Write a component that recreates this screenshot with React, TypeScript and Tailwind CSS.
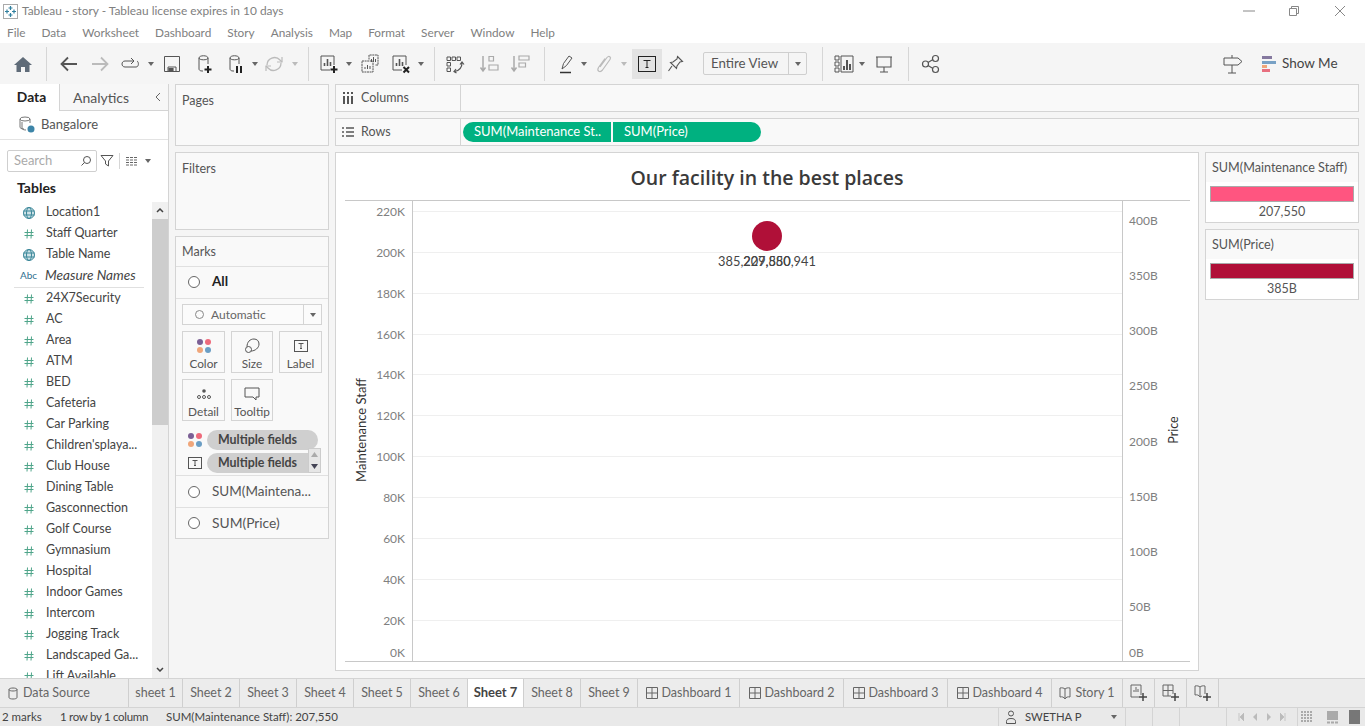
import React from "react";

type IconProps = { className?: string };

const fieldNames = [
  "24X7Security", "AC", "Area", "ATM", "BED", "Cafeteria", "Car Parking", "Children'splaya...", "Club House",
  "Dining Table", "Gasconnection", "Golf Course", "Gymnasium", "Hospital", "Indoor Games", "Intercom",
  "Jogging Track", "Landscaped Ga...", "Lift Available",
];
const leftTicks = [
  ["220K", 212], ["200K", 253], ["180K", 294], ["160K", 335], ["140K", 375], ["120K", 416],
  ["100K", 457], ["80K", 498], ["60K", 539], ["40K", 580], ["20K", 621], ["0K", 653],
] as const;
const rightTicks = [
  ["400B", 221], ["350B", 276], ["300B", 331], ["250B", 386], ["200B", 442],
  ["150B", 497], ["100B", 552], ["50B", 607], ["0B", 653],
] as const;
const gridLines = [211, 252, 293, 334, 374, 415, 456, 497, 538, 579, 620];

function Svg({ className = "", children }: IconProps & { children: React.ReactNode }) {
  return (
    <svg width="24" height="24" viewBox="0 0 24 24" fill="none" stroke="#555" strokeWidth="1.2" className={"shrink-0 " + className}>
      {children}
    </svg>
  );
}

function Caret({ className = "" }: IconProps) {
  return (
    <svg width="6" height="4" viewBox="0 0 6 4" className={"shrink-0 " + className}>
      <path d="M0 0h6L3 4z" fill="#666" />
    </svg>
  );
}

function Sep({ className = "" }: IconProps) {
  return <div className={"w-px h-[34px] bg-[#d6d6d6] shrink-0 " + className} />;
}

function Cylinder({ badge, className }: IconProps & { badge: "plus" | "pause" }) {
  return (
    <Svg className={className}>
      <path d="M7 6c0-3 9-3 9 0v6M7 6c0 2.400 9 2.400 9 0M7 6v11c0 1 1 2 3 2h1" strokeWidth="1" />
      {badge === "plus" ? (
        <path d="M16 14v7M12.500 17.500h7" stroke="#222" strokeWidth="2" />
      ) : (
        <path d="M14 14v7M18 14v7" stroke="#222" strokeWidth="2" />
      )}
    </Svg>
  );
}

function ChartBox({ badge, className }: IconProps & { badge: "plus" | "x" }) {
  return (
    <Svg className={className}>
      <path d="M17 13V4H4v14h9" strokeWidth="1" />
      <path d="M7.500 14v-3M10.500 14V7M13.500 14v-4" strokeWidth="1.600" />
      {badge === "plus" ? (
        <path d="M17 14v7M13.500 17.500h7" stroke="#222" strokeWidth="2" />
      ) : (
        <path d="M14.500 15l5.500 5.500M20 15l-5.500 5.500" stroke="#222" strokeWidth="2" />
      )}
    </Svg>
  );
}

function ToolBar() {
  return (
    <div className="h-[41px] bg-[#f5f5f5] flex items-center shrink-0 pl-[11px] pr-[28px]">
      <svg width="24" height="24" viewBox="0 0 24 24" className="shrink-0">
        <path d="M12 5l9 8h-2.500v7h-4.500v-5h-4v5H5.500v-7H3z" fill="#5f6b78" />
      </svg>
      <Sep className="ml-[11px]" />
      <Svg className="ml-[10px]">
        <path d="M20 12H5M11 5.500L4.500 12l6.500 6.500" stroke="#555" strokeWidth="1.800" />
      </Svg>
      <Svg className="ml-[7px]">
        <path d="M4 12h15M13 5.500l6.500 6.500-6.500 6.500" stroke="#bbb" strokeWidth="1.800" />
      </Svg>
      <Svg className="ml-[6px]">
        <path d="M16 9H7c-4 0-4 6 0 6h11c3 0 3-5 1-6M13 6l3 3-3 3" strokeWidth="1" />
      </Svg>
      <Caret className="ml-[6px]" />
      <Svg className="ml-[6px]">
        <path d="M4.500 4.500h15v15h-15zM8 19.500V15h8v4.500" strokeWidth="1" />
        <path d="M9 16.500h4v3H9z" fill="#555" />
      </Svg>
      <Cylinder badge="plus" className="ml-[8px]" />
      <Cylinder badge="pause" className="ml-[7px]" />
      <Caret className="ml-[5px]" />
      <Svg className="ml-[4px]">
        <path d="M5 13a7.500 7.500 0 0 1 13-5l2 2M19 11a7.500 7.500 0 0 1-13 5l-2-2" stroke="#bbb" strokeWidth="1.300" />
        <path d="M20 5v5h-5M4 19v-5h5" stroke="#bbb" />
      </Svg>
      <svg width="6" height="4" viewBox="0 0 6 4" className="shrink-0 ml-[6px]">
        <path d="M0 0h6L3 4z" fill="#bbb" />
      </svg>
      <Sep className="ml-[10px]" />
      <ChartBox badge="plus" className="ml-[8px]" />
      <Caret className="ml-[5px]" />
      <Svg className="ml-[6px]">
        <path d="M11 7.500V3h9v10h-3M4 9h11v11H4z" strokeWidth="1" strokeDasharray="2 0.600" />
        <path d="M13.500 10V7M15.500 10V5M17.500 10V7M7 17v-2M9.500 17v-4M12 17v-3" strokeWidth="1" />
      </Svg>
      <ChartBox badge="x" className="ml-[7px]" />
      <Caret className="ml-[5px]" />
      <Sep className="ml-[10px]" />
      <Svg className="ml-[8px]">
        <path d="M4 5h3.500v3.500H4zM9 5h3.500v3.500H9zM14 5h3.500v3.500H14zM4 10.500h3.500V14H4zM4 16h3.500v3.500H4z" strokeWidth="1" />
        <path d="M19 11c0 4.500-2.500 7.500-7.500 8.500M13 17l-2 2.500 2.500 1.500M17 12.500l2-2.500 2 2.500" strokeWidth="1.200" />
      </Svg>
      <Svg className="ml-[10px]">
        <path d="M6 4v15M3.500 15.500L6 19l2.500-3.500" stroke="#aaa" strokeWidth="1.500" />
        <path d="M12 4.500h4.500V9H12zM12 13h9v5h-9z" stroke="#aaa" />
      </Svg>
      <Svg className="ml-[7px]">
        <path d="M6 4v15M3.500 15.500L6 19l2.500-3.500" stroke="#aaa" strokeWidth="1.500" />
        <path d="M11 4h10v4H11zM11 11h6.500v4H11z" stroke="#aaa" />
      </Svg>
      <Sep className="ml-[12px]" />
      <Svg className="ml-[10px]">
        <path d="M7 17l1.500-5.500L14 4l3 2-5.500 7.500z" strokeWidth="1" />
        <path d="M5 20.500h11" stroke="#333" strokeWidth="1.500" />
      </Svg>
      <Caret className="ml-[2px]" />
      <Svg className="ml-[5px]">
        <path d="M8 15l7-9.500c2-2.500 4.500 0 3 2L10.500 18c-2.500 3-6 1-4-2.500l6.500-9" stroke="#bbb" strokeWidth="1.200" />
      </Svg>
      <svg width="6" height="4" viewBox="0 0 6 4" className="shrink-0 ml-[5px]">
        <path d="M0 0h6L3 4z" fill="#bbb" />
      </svg>
      <div className="ml-[5px] w-[30px] h-[30px] bg-[#e3e3e3] flex items-center justify-center shrink-0">
        <svg width="18" height="16" viewBox="0 0 18 16">
          <rect x="0.500" y="0.500" width="17" height="15" fill="none" stroke="#222" />
          <path d="M5.500 4.500h7M9 4.500v7M7.500 11.500h3" stroke="#222" />
        </svg>
      </div>
      <Svg className="ml-[2px]">
        <path d="M13.500 4.500l5 5-2.500.500-3 4-.500 2.500-6-6 2.500-.500 4-3zM8 14l-3.500 5" strokeWidth="1.100" />
      </Svg>
      <div className="ml-[15px] w-[104px] h-[23px] border border-[#cfcfcf] rounded-[2px] flex items-center shrink-0">
        <span className="flex-1 pl-[7px] text-[13.300px] text-[#555]">Entire View</span>
        <div className="w-[18px] h-full border-l border-[#cfcfcf] flex items-center justify-center">
          <Caret />
        </div>
      </div>
      <Sep className="ml-[15px]" />
      <Svg className="ml-[9px]">
        <path d="M3 4h4v4H3zM3 10h4v4H3zM3 16h4v4H3zM9 4h12v16H9z" strokeWidth="1" />
        <path d="M12 18v-4M15 18V8M18 18v-6" strokeWidth="2" />
      </Svg>
      <Caret className="ml-[3px]" />
      <Svg className="ml-[7px]">
        <path d="M4 5h16M5 5v10h14V5M12 15v5M8 20h8" strokeWidth="1.100" />
      </Svg>
      <Sep className="ml-[12px]" />
      <Svg className="ml-[10px]">
        <circle cx="6.500" cy="12" r="3" />
        <circle cx="16.500" cy="6.500" r="3" />
        <circle cx="16.500" cy="17.500" r="3" />
        <path d="M9 10.500l5-3M9 13.500l5 3" />
      </Svg>
      <div className="flex-1" />
      <Svg>
        <path d="M3 6h14l4 3.500-4 3.500H3zM11 6V3M11 13v8M7 21h8" strokeWidth="1" />
      </Svg>
      <svg width="14" height="16" viewBox="0 0 14 16" className="shrink-0 ml-[17px]">
        <rect x="0" y="0" width="10" height="3" fill="#85799f" />
        <rect x="0" y="5" width="14" height="3" fill="#78a1c5" />
        <rect x="0" y="9" width="5" height="3" fill="#f0a67a" />
        <rect x="0" y="13" width="8" height="3" fill="#e86f7f" />
      </svg>
      <span className="ml-[6px] w-[55px] whitespace-nowrap text-[13.500px] text-[#444]">Show Me</span>
    </div>
  );
}

function FieldIcon({ kind }: { kind: "globe" | "hash" | "abc" }) {
  if (kind === "abc") return <span className="w-[16px] text-[10px] text-[#2f6f8f] text-center">Abc</span>;
  if (kind === "globe")
    return (
      <svg width="14" height="14" viewBox="0 0 14 14" fill="none" stroke="#3b8799" strokeWidth="1" className="mx-px shrink-0">
        <circle cx="7" cy="7" r="5.500" fill="#cfe3e8" />
        <ellipse cx="7" cy="7" rx="2.500" ry="5.500" />
        <path d="M1.500 5h11M1.500 9h11" />
      </svg>
    );
  return (
    <svg width="14" height="14" viewBox="0 0 14 14" fill="none" stroke="#4fa58a" strokeWidth="1" className="mx-px shrink-0">
      <path d="M5.500 2.500L5 11.500M9.500 2.500L9 11.500M2.500 5.500h9M2.500 8.500h9" />
    </svg>
  );
}

function FieldRow({ name, kind, italic }: { name: string; kind: "globe" | "hash" | "abc"; italic?: boolean }) {
  return (
    <div className={"h-[21px] flex items-center shrink-0 " + (kind === "abc" ? "pl-[20px]" : "pl-[21px]")}>
      <FieldIcon kind={kind} />
      <span className={"ml-[9px] whitespace-nowrap text-[#444] " + (italic ? "italic text-[13.600px]" : "text-[12.500px]")}>{name}</span>
    </div>
  );
}

function DataPane() {
  return (
    <div className="w-[169px] shrink-0 bg-white border-r border-[#d4d4d4] flex flex-col overflow-hidden">
      <div className="h-[27px] flex shrink-0">
        <div className="w-[60px] pl-[4px] bg-white border-r border-[#d4d4d4] flex items-center justify-center text-[13.800px] font-bold text-[#222]">Data</div>
        <div className="flex-1 bg-[#f7f7f7] border-b border-[#d4d4d4] flex items-center pl-[13px] text-[14px] text-[#555]">
          <span className="flex-1">Analytics</span>
          <svg width="8" height="10" viewBox="0 0 8 10" fill="none" stroke="#666" className="mr-[6px]">
            <path d="M6 1L2 5l4 4" />
          </svg>
        </div>
      </div>
      <div className="h-[29px] border-b border-[#e3e3e3] flex items-center pl-[19px] shrink-0">
        <svg width="16" height="18" viewBox="0 0 16 18" fill="none" stroke="#777" strokeWidth="1">
          <ellipse cx="6" cy="3" rx="5" ry="2" />
          <path d="M1 3v8c0 1 1 2 4 2M11 3v4M3 6v6c0 1 1 2 4 2" />
          <circle cx="12" cy="13" r="3.500" fill="#3d85a8" stroke="none" />
        </svg>
        <span className="ml-[6px] text-[13px] text-[#555]">Bangalore</span>
      </div>
      <div className="h-[22px] mt-[10px] flex items-center pl-[7px] shrink-0">
        <div className="w-[90px] h-[22px] border border-[#cfcfcf] rounded-[2px] flex items-center pl-[6px] pr-[4px]">
          <span className="flex-1 text-[13px] text-[#aaa]">Search</span>
          <svg width="12" height="12" viewBox="0 0 12 12" fill="none" stroke="#555">
            <circle cx="7" cy="5" r="3.500" />
            <path d="M4.500 7.500L1.500 10.500" />
          </svg>
        </div>
        <svg width="14" height="14" viewBox="0 0 14 14" fill="none" stroke="#555" className="ml-[3px]">
          <path d="M1 1.500h12L8.500 7v5l-3-2V7z" />
        </svg>
        <div className="w-px h-[16px] bg-[#d6d6d6] ml-[5px]" />
        <svg width="12" height="10" viewBox="0 0 12 10" stroke="#666" className="ml-[6px]">
          <path d="M0 1.500h12M0 4h12M0 6.500h12M0 9h12" strokeWidth="1" strokeDasharray="3 1" />
        </svg>
        <Caret className="ml-[7px]" />
      </div>
      <div className="mt-[7px] pl-[17px] h-[16px] flex items-center text-[14px] font-bold text-[#222] shrink-0">Tables</div>
      <div className="flex-1 relative overflow-hidden">
        <div className="flex flex-col pt-[7px] w-[152px]">
          <FieldRow name="Location1" kind="globe" />
          <FieldRow name="Staff Quarter" kind="hash" />
          <FieldRow name="Table Name" kind="globe" />
          <FieldRow name="Measure Names" kind="abc" italic />
          <div className="h-px bg-[#e0e0e0] ml-[14px] mr-[8px] -mt-px shrink-0 translate-y-[2px]" />
          <div className="h-[2px] shrink-0" />
          {fieldNames.map((n) => (
            <FieldRow key={n} name={n} kind="hash" />
          ))}
        </div>
        <div className="absolute right-0 top-[7px] bottom-0 w-[16px] bg-[#f0f0f0] flex flex-col">
          <div className="h-[17px] flex items-center justify-center">
            <svg width="8" height="5" viewBox="0 0 8 5" fill="none" stroke="#444" strokeWidth="1.500">
              <path d="M1 4l3-3 3 3" />
            </svg>
          </div>
          <div className="h-[206px] bg-[#cdcdcd]" />
          <div className="flex-1" />
          <div className="h-[18px] flex items-center justify-center">
            <svg width="8" height="5" viewBox="0 0 8 5" fill="none" stroke="#444" strokeWidth="1.500">
              <path d="M1 1l3 3 3-3" />
            </svg>
          </div>
        </div>
      </div>
    </div>
  );
}

function Radio() {
  return <div className="w-[12px] h-[12px] rounded-full border border-[#666] bg-white shrink-0" />;
}

function Dots({ className = "" }: IconProps) {
  return (
    <svg width="16" height="16" viewBox="0 0 16 16" className={"shrink-0 " + className}>
      <circle cx="4" cy="4" r="3" fill="#7b5f95" />
      <circle cx="12" cy="4" r="3" fill="#ee6a7b" />
      <circle cx="4" cy="12" r="3" fill="#f0a67a" />
      <circle cx="12" cy="12" r="3" fill="#6b9ec4" />
    </svg>
  );
}

function TBox({ className = "" }: IconProps) {
  return (
    <svg width="14" height="12" viewBox="0 0 14 12" className={"shrink-0 " + className}>
      <rect x="0.500" y="0.500" width="13" height="11" fill="none" stroke="#555" />
      <path d="M4.500 3.500h5M7 3.500v5M6 8.500h2" stroke="#555" />
    </svg>
  );
}

function MarkBtn({ label, children }: { label: string; children: React.ReactNode }) {
  return (
    <div className="h-[42px] border border-[#d4d4d4] flex flex-col items-center pt-[5px]">
      <div className="h-[18px] flex items-center justify-center">{children}</div>
      <span className="text-[11.800px] leading-[17px] text-[#555]">{label}</span>
    </div>
  );
}

function Panel({ title, className }: { title: string; className: string }) {
  return (
    <div className={"bg-[#f9f9f9] border border-[#d4d4d4] px-[6px] pt-[7px] text-[12.500px] text-[#555] shrink-0 " + className}>{title}</div>
  );
}

function CardsColumn() {
  return (
    <div className="w-[154px] shrink-0 ml-[6px] flex flex-col gap-[6px]">
      <Panel title="Pages" className="h-[62px]" />
      <Panel title="Filters" className="h-[78px]" />
      <div className="h-[303px] bg-[#f9f9f9] border border-[#d4d4d4] flex flex-col shrink-0">
        <div className="h-[30px] border-b border-[#e0e0e0] px-[6px] pt-[1px] flex items-center text-[12.500px] text-[#555]">Marks</div>
        <div className="h-[32px] border-b border-[#e0e0e0] flex items-center pl-[12px] pb-[2px] shrink-0">
          <Radio />
          <span className="ml-[12px] text-[13.500px] font-bold text-[#222]">All</span>
        </div>
        <div className="mx-[6px] mt-[5px] h-[21px] border border-[#d4d4d4] bg-[#fbfbfb] flex items-center shrink-0">
          <div className="flex-1 flex items-center pl-[12px]">
            <div className="w-[9px] h-[9px] rounded-full border border-[#888]" />
            <span className="ml-[7px] text-[12px] text-[#666]">Automatic</span>
          </div>
          <div className="w-[18px] h-full border-l border-[#d4d4d4] flex items-center justify-center">
            <Caret />
          </div>
        </div>
        <div className="mx-[6px] mt-[6px] grid grid-cols-[43px_42px_43px] gap-x-[6px] gap-y-[6px] shrink-0">
          <MarkBtn label="Color">
            <Dots />
          </MarkBtn>
          <MarkBtn label="Size">
            <svg width="16" height="16" viewBox="0 0 16 16" fill="none" stroke="#555">
              <circle cx="4.500" cy="11.500" r="3" />
              <path d="M3 8.700C3 4 6 1 10 1c3 0 5 2 5 5 0 4-4 7-8 7" />
            </svg>
          </MarkBtn>
          <MarkBtn label="Label">
            <TBox />
          </MarkBtn>
          <MarkBtn label="Detail">
            <svg width="16" height="14" viewBox="0 0 16 14" fill="#555">
              <circle cx="8" cy="4" r="1.800" />
              <g fill="none" stroke="#555">
                <circle cx="3" cy="10" r="1.500" />
                <circle cx="8" cy="10" r="1.500" />
                <circle cx="13" cy="10" r="1.500" />
              </g>
            </svg>
          </MarkBtn>
          <MarkBtn label="Tooltip">
            <svg width="16" height="14" viewBox="0 0 16 14" fill="none" stroke="#555">
              <path d="M1 1h14v9h-3v3l-3-3H1z" />
            </svg>
          </MarkBtn>
        </div>
        <div className="relative h-[44px] mt-[9px] shrink-0">
          <div className="flex items-center h-[20px] pl-[12px]">
            <Dots className="-ml-[1px]" />
            <div className="ml-[4px] w-[111px] h-[20px] rounded-full bg-[#cfcfcf] pl-[11px] pt-[1px] flex items-center text-[12.400px] font-bold text-[#444]">Multiple fields</div>
          </div>
          <div className="flex items-center h-[20px] mt-[3px] pl-[12px]">
            <TBox className="mr-px" />
            <div className="ml-[4px] w-[111px] h-[20px] rounded-full bg-[#cfcfcf] pl-[11px] pt-[1px] flex items-center text-[12.400px] font-bold text-[#444]">Multiple fields</div>
          </div>
          <div className="absolute left-[132px] top-[18px] w-[13px] h-[25px] bg-[#e6e6e6] border border-[#ccc] flex flex-col items-center justify-around">
            <svg width="7" height="5" viewBox="0 0 7 5">
              <path d="M0 5h7L3.500 0z" fill="#aaa" />
            </svg>
            <svg width="7" height="5" viewBox="0 0 7 5">
              <path d="M0 0h7L3.500 5z" fill="#445" />
            </svg>
          </div>
        </div>
        <div className="h-[32px] mt-px border-t border-[#e0e0e0] flex items-center pl-[12px] shrink-0">
          <Radio />
          <span className="ml-[12px] text-[13.500px] text-[#555] whitespace-nowrap">SUM(Maintena...</span>
        </div>
        <div className="flex-1 border-t border-[#e0e0e0] flex items-center pl-[12px]">
          <Radio />
          <span className="ml-[12px] text-[13.800px] text-[#555]">SUM(Price)</span>
        </div>
      </div>
    </div>
  );
}

function Shelf({ title, icon, children }: { title: string; icon: React.ReactNode; children?: React.ReactNode }) {
  return (
    <div className="h-[28px] bg-[#f9f9f9] border border-[#d4d4d4] flex shrink-0">
      <div className="w-[125px] h-full border-r border-[#d4d4d4] flex items-center pl-[6px] text-[12.500px] text-[#555]">
        <div className="w-[12px] flex justify-center">{icon}</div>
        <span className="ml-[7px]">{title}</span>
      </div>
      <div className="flex-1 flex items-center pl-[2px] gap-[2px]">{children}</div>
    </div>
  );
}

function Chart() {
  return (
    <div className="w-[864px] h-[519px] bg-white border border-[#d4d4d4] relative shrink-0 flex flex-col">
      <div className="h-[47px] flex items-center justify-center text-[19.500px] font-semibold text-[#3a3a3a] shrink-0 pt-[3px]" style={{ fontFamily: '"Open Sans", sans-serif' }}>
        Our facility in the best places
      </div>
      {/* plot: coordinates below are offsets from the window top, moved by -153 */}
      <div className="absolute left-[9px] w-[845px] top-[47px] h-[462px] border-y border-[#c8c8c8]" />
      <div className="absolute left-[76px] top-[47px] h-[462px] w-px bg-[#c8c8c8]" />
      <div className="absolute left-[786px] top-[47px] h-[462px] w-px bg-[#c8c8c8]" />
      {gridLines.map((y) => (
        <div key={y} className="absolute left-[77px] w-[709px] h-px bg-[#efefef]" style={{ top: y - 153 }} />
      ))}
      {leftTicks.map(([t, y]) => (
        <span key={t} className="absolute right-[793px] text-[12px] leading-[14px] text-[#808080]" style={{ top: y - 160 }}>{t}</span>
      ))}
      {rightTicks.map(([t, y]) => (
        <span key={t} className="absolute left-[793px] text-[12px] leading-[14px] text-[#808080]" style={{ top: y - 160 }}>{t}</span>
      ))}
      <span className="absolute left-[26px] top-[277px] -translate-x-1/2 -translate-y-1/2 -rotate-90 whitespace-nowrap text-[13px] text-[#333]">Maintenance Staff</span>
      <span className="absolute left-[838px] top-[277px] -translate-x-1/2 -translate-y-1/2 -rotate-90 whitespace-nowrap text-[12.500px] text-[#333]">Price</span>
      <div className="absolute left-[416px] top-[68px] w-[30px] h-[30px] rounded-full bg-[#b01038]" />
      <span className="absolute left-[431px] top-[100px] -translate-x-1/2 whitespace-nowrap text-[12.800px] leading-[16px] text-[#444]">385,229,880,941</span>
      <span className="absolute left-[431px] top-[100px] -translate-x-1/2 whitespace-nowrap text-[12.800px] leading-[16px] text-[#444]">207,550</span>
    </div>
  );
}

function Legend({ title, value, color }: { title: string; value: string; color: string }) {
  return (
    <div className="h-[71px] bg-white border border-[#d4d4d4] flex flex-col shrink-0">
      <div className="h-[29px] bg-[#f9f9f9] flex items-center pl-[6px] pt-[2px] text-[12.600px] text-[#555] whitespace-nowrap">{title}</div>
      <div className="mx-[4px] mt-[4px] h-[16px] border border-[#aaa]" style={{ backgroundColor: color }} />
      <div className="text-center text-[12.500px] leading-[20px] text-[#555]">{value}</div>
    </div>
  );
}

function TabItem({ label, w, kind, active }: { label: string; w: string; kind?: "dash" | "story" | "ds"; active?: boolean }) {
  return (
    <div className={"h-full shrink-0 border-r border-[#cfcfcf] flex items-center justify-center whitespace-nowrap " + w + (active ? " bg-white font-bold text-[13px] text-[#444]" : " text-[12.500px] text-[#666]")}>
      {kind === "dash" && (
        <svg width="12" height="12" viewBox="0 0 12 12" fill="none" stroke="#666" className="mr-[4px]">
          <path d="M.5.5h11v11H.5zM6 .5v11M.5 6h11" />
        </svg>
      )}
      {kind === "story" && (
        <svg width="12" height="13" viewBox="0 0 12 13" fill="none" stroke="#666" className="mr-[4px]">
          <path d="M1 1c2-.5 4 0 5 1 1-1 3-1.500 5-1v9c-2-.5-4 0-5 2-1-2-3-2.500-5-2zM6 2v10" />
        </svg>
      )}
      {label}
    </div>
  );
}

function AddTab({ kind }: { kind: "sheet" | "dash" | "story" }) {
  return (
    <div className="w-[32px] h-full shrink-0 border-r border-[#cfcfcf] flex items-center justify-center">
      <svg width="18" height="18" viewBox="0 0 18 18" fill="none" stroke="#666">
        {kind === "sheet" && <path d="M11 11V1H1v12h8M4 8V6M6 8V3M8 8V5" />}
        {kind === "dash" && <path d="M11 10V1H1v11h8M6 1v11M1 6.500h10" />}
        {kind === "story" && <path d="M1 2c2-.5 4 0 5 1 1-1 3-1.500 5-1v8M1 2v9c2-.5 4 0 5 2l2-1M6 3v10" />}
        <path d="M13 9v8M9 13h8" stroke="#444" strokeWidth="1.500" />
      </svg>
    </div>
  );
}

export default function App() {
  const font = { fontFamily: "Lato, sans-serif" };
  return (
    <div className="w-[1365px] h-[726px] flex flex-col overflow-hidden bg-white" style={font}>
      {/* title bar */}
      <div className="h-[22px] flex items-center shrink-0 pl-[3px]">
        <svg width="15" height="15" viewBox="0 0 15 15" fill="none" stroke="#2f7f9e" strokeWidth="1.200">
          <rect x="0.500" y="0.500" width="14" height="14" stroke="#aaa" strokeWidth="1" />
          <path d="M7.500 2v4M5.500 4h4M7.500 9v4M5.500 11h4M2 7.500h4M4 5.500v4M9 7.500h4M11 5.500v4" />
        </svg>
        <span className="ml-[4px] text-[11.900px] text-[#808080]">Tableau - story - Tableau license expires in 10 days</span>
        <div className="flex-1" />
        <svg width="12" height="2" viewBox="0 0 12 2" className="mr-[33px]">
          <path d="M0 1h12" stroke="#888" />
        </svg>
        <svg width="12" height="12" viewBox="0 0 12 12" fill="none" stroke="#888" className="mr-[34px]">
          <path d="M1.500 3.500h7v7h-7zM3.500 3.500v-2h7v7h-2" />
        </svg>
        <svg width="12" height="12" viewBox="0 0 12 12" fill="none" stroke="#888" className="mr-[19px]">
          <path d="M1 1l10 10M11 1L1 11" />
        </svg>
      </div>
      {/* menu */}
      <div className="h-[21px] flex items-center shrink-0 pl-[7px] gap-[16px] text-[11.800px] text-[#808080]">
        {["File", "Data", "Worksheet", "Dashboard", "Story", "Analysis", "Map", "Format", "Server", "Window", "Help"].map((m) => (
          <span key={m}>{m}</span>
        ))}
      </div>
      <ToolBar />
      {/* workspace */}
      <div className="flex-1 flex bg-[#f5f5f5] min-h-0">
        <DataPane />
        <CardsColumn />
        <div className="ml-[6px] flex flex-col gap-[6px] w-[1024px] shrink-0">
          <Shelf
            title="Columns"
            icon={
              <svg width="12" height="12" viewBox="0 0 12 12" stroke="#555" strokeWidth="2">
                <path d="M2 4v8M6 4v8M10 4v8M2 0v2M6 0v2M10 0v2" />
              </svg>
            }
          />
          <Shelf
            title="Rows"
            icon={
              <svg width="12" height="10" viewBox="0 0 12 10" stroke="#555" strokeWidth="1.500">
                <path d="M0 1h2M4 1h8M0 5h2M4 5h8M0 9h2M4 9h8" />
              </svg>
            }
          >
            <div className="w-[148px] h-[20px] rounded-l-full bg-[#00b180] pl-[11px] flex items-center text-[13px] text-white whitespace-nowrap">SUM(Maintenance St..</div>
            <div className="w-[148px] h-[20px] rounded-r-full bg-[#00b180] pl-[11px] flex items-center text-[13px] text-white">SUM(Price)</div>
          </Shelf>
          <div className="flex gap-[6px]">
            <Chart />
            <div className="flex-1 flex flex-col gap-[6px]">
              <Legend title="SUM(Maintenance Staff)" value="207,550" color="#ff5580" />
              <Legend title="SUM(Price)" value="385B" color="#b01038" />
            </div>
          </div>
        </div>
      </div>
      {/* tabs */}
      <div className="h-[29px] bg-[#ececec] border-t border-[#d4d4d4] flex shrink-0">
        <div className="w-[129px] h-full border-r border-[#cfcfcf] flex items-center pl-[8px] text-[12.500px] text-[#666] shrink-0">
          <svg width="10" height="13" viewBox="0 0 10 13" fill="none" stroke="#666" className="mr-[5px]">
            <path d="M1 2.500c0-2 8-2 8 0v8c0 2-8 2-8 0zM1 2.500c0 2 8 2 8 0" />
          </svg>
          Data Source
        </div>
        <TabItem label="sheet 1" w="w-[54px]" />
        <TabItem label="Sheet 2" w="w-[57px]" />
        <TabItem label="Sheet 3" w="w-[57px]" />
        <TabItem label="Sheet 4" w="w-[57px]" />
        <TabItem label="Sheet 5" w="w-[57px]" />
        <TabItem label="Sheet 6" w="w-[57px]" />
        <TabItem label="Sheet 7" w="w-[56px]" active />
        <TabItem label="Sheet 8" w="w-[57px]" />
        <TabItem label="Sheet 9" w="w-[57px]" />
        <TabItem label="Dashboard 1" w="w-[102px]" kind="dash" />
        <TabItem label="Dashboard 2" w="w-[104px]" kind="dash" />
        <TabItem label="Dashboard 3" w="w-[104px]" kind="dash" />
        <TabItem label="Dashboard 4" w="w-[104px]" kind="dash" />
        <TabItem label="Story 1" w="w-[71px]" kind="story" />
        <AddTab kind="sheet" />
        <AddTab kind="dash" />
        <AddTab kind="story" />
      </div>
      {/* status bar */}
      <div className="h-[19px] bg-[#e9e9e9] border-t border-[#d4d4d4] flex items-center shrink-0 text-[11.500px] text-[#444]">
        <span className="ml-[2px] w-[41px] whitespace-nowrap">2 marks</span>
        <span className="ml-[17px] w-[88px] whitespace-nowrap tracking-[-0.3px]">1 row by 1 column</span>
        <span className="ml-[18px]">SUM(Maintenance Staff): 207,550</span>
        <div className="flex-1" />
        <div className="w-[128px] h-full border-x border-[#d4d4d4] flex items-center pl-[6px] shrink-0">
          <svg width="12" height="14" viewBox="0 0 12 14" fill="none" stroke="#555">
            <circle cx="6" cy="3.500" r="2.500" />
            <path d="M1.500 13.500v-2c0-2 1.500-3 4.500-3s4.500 1 4.500 3v2z" />
          </svg>
          <span className="ml-[8px] text-[11.300px] flex-1">SWETHA P</span>
          <Caret className="mr-[8px]" />
        </div>
        <div className="w-[27px] h-full border-r border-[#d4d4d4] shrink-0" />
        <div className="w-[27px] h-full border-r border-[#d4d4d4] shrink-0" />
        <div className="w-[47px] h-full border-r border-[#d4d4d4] shrink-0" />
        <div className="w-[71px] h-full border-r border-[#d4d4d4] flex items-center justify-around px-[6px] shrink-0">
          <svg width="6" height="8" viewBox="0 0 6 8"><path d="M1 0v8M6 0v8L2 4z" stroke="#bbb" fill="#bbb" strokeWidth="0.800" /></svg>
          <svg width="4" height="8" viewBox="0 0 4 8"><path d="M4 0v8L0 4z" fill="#bbb" /></svg>
          <svg width="4" height="8" viewBox="0 0 4 8"><path d="M0 0v8l4-4z" fill="#bbb" /></svg>
          <svg width="6" height="8" viewBox="0 0 6 8"><path d="M5 0v8M0 0v8l4-4z" stroke="#bbb" fill="#bbb" strokeWidth="0.800" /></svg>
        </div>
        <div className="flex items-center pl-[3px] pr-[5px] shrink-0">
          <svg width="11" height="12" viewBox="0 0 11 12" stroke="#aaa" strokeWidth="2" strokeDasharray="2 1">
            <path d="M0 1h11M0 4h11M0 7h11M0 10h11" />
          </svg>
          <svg width="11" height="13" viewBox="0 0 11 13" className="ml-[15px]">
            <rect width="11" height="9" fill="#aaa" />
            <path d="M0 11.500h11" stroke="#aaa" strokeWidth="2" strokeDasharray="3 1" />
          </svg>
          <div className="ml-[11px] w-[11px] h-[14px] bg-[#777]" />
        </div>
      </div>
    </div>
  );
}
